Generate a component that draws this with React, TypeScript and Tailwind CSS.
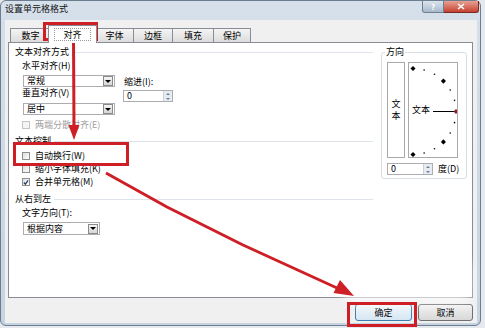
import React from "react";

const font = "font-['Noto_Sans_CJK_SC',sans-serif]";

function DropBtn() {
  return (
    <span className="w-[10px] h-[10px] border border-[#8a8a8a] bg-linear-to-b from-[#f6f6f6] to-[#d6d6d6] flex items-center justify-center">
      <span className="w-0 h-0 border-l-[3px] border-r-[3px] border-t-[3px] border-l-transparent border-r-transparent border-t-black" />
    </span>
  );
}

function Combo({ text, className }: { text: string; className: string }) {
  return (
    <div className={`flex items-center justify-between border border-[#abadb3] bg-white pl-[3px] pr-px ${className}`}>
      <span>{text}</span>
      <DropBtn />
    </div>
  );
}

function Spin({ className }: { className: string }) {
  return (
    <div className={`flex items-stretch justify-between border border-[#abadb3] bg-white pl-[3px] ${className}`}>
      <span className="self-center">0</span>
      <span className="flex flex-col w-[9px] border-l border-[#c9d0d8] bg-[#e6ecf2]">
        <span className="flex-1 flex items-center justify-center">
          <span className="w-0 h-0 border-l-[2px] border-r-[2px] border-b-[2px] border-l-transparent border-r-transparent border-b-[#6f7f90]" />
        </span>
        <span className="flex-1 flex items-center justify-center">
          <span className="w-0 h-0 border-l-[2px] border-r-[2px] border-t-[2px] border-l-transparent border-r-transparent border-t-[#6f7f90]" />
        </span>
      </span>
    </div>
  );
}

function Check({ label, checked, disabled, className }: { label: string; checked?: boolean; disabled?: boolean; className: string }) {
  return (
    <div className={`flex items-center h-[12px] ml-[7px] gap-[5px] ${className}`}>
      <span className={`w-[8px] h-[8px] border flex items-center justify-center ${disabled ? "border-[#c4c4c4] bg-[#f4f4f4]" : "border-[#8e8f8f] bg-linear-to-br from-[#dcdcdc] to-white"}`}>
        {checked && (
          <svg width="7" height="7" viewBox="0 0 7 7">
            <path d="M1 3.5 L2.8 5.5 L6 1" fill="none" stroke="#24406a" strokeWidth="1.4" />
          </svg>
        )}
      </span>
      <span className={disabled ? "text-[#a0a0a0]" : ""}>{label}</span>
    </div>
  );
}

function Heading({ text, className }: { text: string; className: string }) {
  return (
    <div className={`flex items-center h-[12px] gap-[3px] ${className}`}>
      <span>{text}</span>
      <span className="flex-1 h-px bg-[#dde3e8]" />
    </div>
  );
}

function Dial() {
  const dots = Array.from({ length: 13 }, (_, i) => {
    const a = ((90 - i * 15) * Math.PI) / 180;
    return { x: 4 + 43 * Math.cos(a), y: 48.5 - 43 * Math.sin(a), big: i % 3 === 0, red: i === 6 };
  });
  return (
    <div className="w-[50px] h-[96px] border border-[#a9a9a9] bg-white relative">
      <svg width="48" height="94" viewBox="0 0 48 94" className="absolute left-0 top-0">
        {dots.map((d, i) =>
          d.big ? (
            <rect
              key={i}
              x={d.x - 1.8}
              y={d.y - 1.8}
              width="3.6"
              height="3.6"
              fill={d.red ? "#8b1a2a" : "#000"}
              transform={`rotate(45 ${d.x} ${d.y})`}
            />
          ) : (
            <circle key={i} cx={d.x} cy={d.y} r="0.8" fill="#000" />
          )
        )}
        <line x1="24" y1="48.5" x2="45" y2="48.5" stroke="#000" strokeWidth="1" />
      </svg>
      <span className="absolute left-[3px] top-[41px]">文本</span>
    </div>
  );
}

export default function App() {
  const tabs = [
    { t: "数字", w: "w-[40px]" },
    { t: "对齐", w: "w-[49px]", sel: true },
    { t: "字体", w: "w-[38px]" },
    { t: "边框", w: "w-[39px]" },
    { t: "填充", w: "w-[41px]" },
    { t: "保护", w: "w-[38px] border-r" },
  ];
  return (
    <div className={`w-[485px] h-[328px] relative overflow-hidden bg-[#e6e9ed] text-[9px] leading-[12px] text-black ${font}`}>
      <div className="w-[481px] h-[326px] flex flex-col rounded-[6px] border border-[#6d7d90] bg-linear-to-b from-[#d6e0ea] to-[#c6d3e1]">
        {/* title bar */}
        <div className="h-[19px] flex items-start pl-[4px]">
          <span className="mt-[2px] text-[#111]">设置单元格格式</span>
          <div className="ml-auto flex mr-px">
            <span className="w-[22px] h-[12px] border border-[#6f7f92] border-t-0 rounded-bl-[3px] bg-linear-to-b from-[#dbe4ee] to-[#a9b9ca] flex items-center justify-center text-[8px] text-white font-bold">?</span>
            <span className="w-[35px] h-[12px] border border-[#7a2a22] border-t-0 border-l-0 rounded-br-[3px] bg-linear-to-b from-[#e8a093] to-[#c4402f] flex items-center justify-center">
              <svg width="8" height="7" viewBox="0 0 8 7">
                <path d="M1 1 L7 6 M7 1 L1 6" stroke="#fff" strokeWidth="1.6" />
              </svg>
            </span>
          </div>
        </div>
        {/* client */}
        <div className="flex-1 ml-[4px] mr-[3px] mb-[2px] bg-[#f0f0f0] flex flex-col pl-[3px] pr-[4px]">
          <div className="h-[22px] flex items-end pl-[2px]">
            {tabs.map((tab) =>
              tab.sel ? (
                <div key={tab.t} className={`${tab.w} -mx-[2px] -mb-px h-[18px] relative z-10 bg-white border border-b-0 border-[#898c95] flex items-center justify-center`}>
                  <span className="border border-dotted border-[#9a9a9a] px-[8px] leading-[11px]">{tab.t}</span>
                </div>
              ) : (
                <div key={tab.t} className={`${tab.w} h-[14px] border-t border-l border-[#898c95] bg-linear-to-b from-[#f4f4f4] to-[#dcdcdc] flex items-center justify-center`}>
                  {tab.t}
                </div>
              )
            )}
          </div>
          <div className="h-[256px] border border-[#898c95] bg-white flex items-start pt-[3px] pl-[6px] pr-[5px]">
            {/* left column */}
            <div className="w-[358px] flex flex-col">
              <Heading text="文本对齐方式" className="" />
              <div className="h-[12px] mt-[2px] ml-[7px]">水平对齐(H)</div>
              <div className="flex items-start mt-[3px] ml-[8px]">
                <div className="flex flex-col w-[92px]">
                  <Combo text="常规" className="h-[12px]" />
                  <div className="h-[12px] -ml-px">垂直对齐(V)</div>
                  <Combo text="居中" className="h-[12px] mt-[4px]" />
                </div>
                <div className="flex flex-col ml-[8px]">
                  <div className="h-[12px] mt-[1px] ml-px">缩进(I):</div>
                  <Spin className="w-[50px] h-[12px] mt-[2px]" />
                </div>
              </div>
              <Check label="两端分散对齐(E)" disabled className="mt-[4px]" />
              <Heading text="文本控制" className="mt-[4px]" />
              <Check label="自动换行(W)" className="mt-[3px]" />
              <Check label="缩小字体填充(K)" className="mt-px" />
              <Check label="合并单元格(M)" checked className="mt-px" />
              <Heading text="从右到左" className="mt-[5px]" />
              <div className="h-[12px] mt-[2px] ml-[7px]">文字方向(T):</div>
              <Combo text="根据内容" className="w-[77px] h-[13px] mt-[3px] ml-[8px]" />
            </div>
            {/* orientation group */}
            <fieldset className="ml-[8px] w-[86px] border border-[#d5dfe5] rounded-[3px] pl-[5px] pt-[4px] pb-[3px]">
              <legend className="-ml-[2px] px-px">方向</legend>
              <div className="flex gap-[3px]">
                <div className="w-[18px] h-[96px] border border-[#a9a9a9] flex flex-col items-center justify-center">
                  <span>文</span>
                  <span>本</span>
                </div>
                <Dial />
              </div>
              <div className="flex items-center mt-[5px] gap-[5px]">
                <Spin className="w-[46px] h-[12px]" />
                <span>度(D)</span>
              </div>
            </fieldset>
          </div>
          <div className="flex justify-end gap-[6px] mt-[6px]">
            <button className="w-[57px] h-[17px] rounded-[3px] border border-[#3c7fb1] bg-linear-to-b from-[#f2f8fc] to-[#d6e6f2] leading-[12px]">确定</button>
            <button className="w-[55px] h-[17px] rounded-[3px] border border-[#707070] bg-linear-to-b from-[#f2f2f2] to-[#d8d8d8] leading-[12px]">取消</button>
          </div>
        </div>
      </div>

      {/* faint watermark haze */}
      <div className="absolute left-[345px] top-[262px] w-[125px] h-[40px] bg-white/70 blur-[6px] pointer-events-none" />

      {/* red annotations */}
      <svg className="absolute inset-0 pointer-events-none" width="485" height="328" viewBox="0 0 485 328">
        <g fill="none" stroke="#cf1f26" strokeWidth="3">
          <rect x="44.5" y="23.5" width="52" height="16" />
          <rect x="14.5" y="143.5" width="113" height="21" />
          <rect x="348.5" y="303.5" width="67" height="22" />
          <line x1="73.5" y1="40" x2="74" y2="127" />
          <polyline points="106,173 167,207 243,245 337,288" strokeLinejoin="round" />
        </g>
        <polygon points="74,140 68.5,125 79.5,125" fill="#cf1f26" />
        <polygon points="354,296 333.5,293 340,280" fill="#cf1f26" />
      </svg>
    </div>
  );
}
